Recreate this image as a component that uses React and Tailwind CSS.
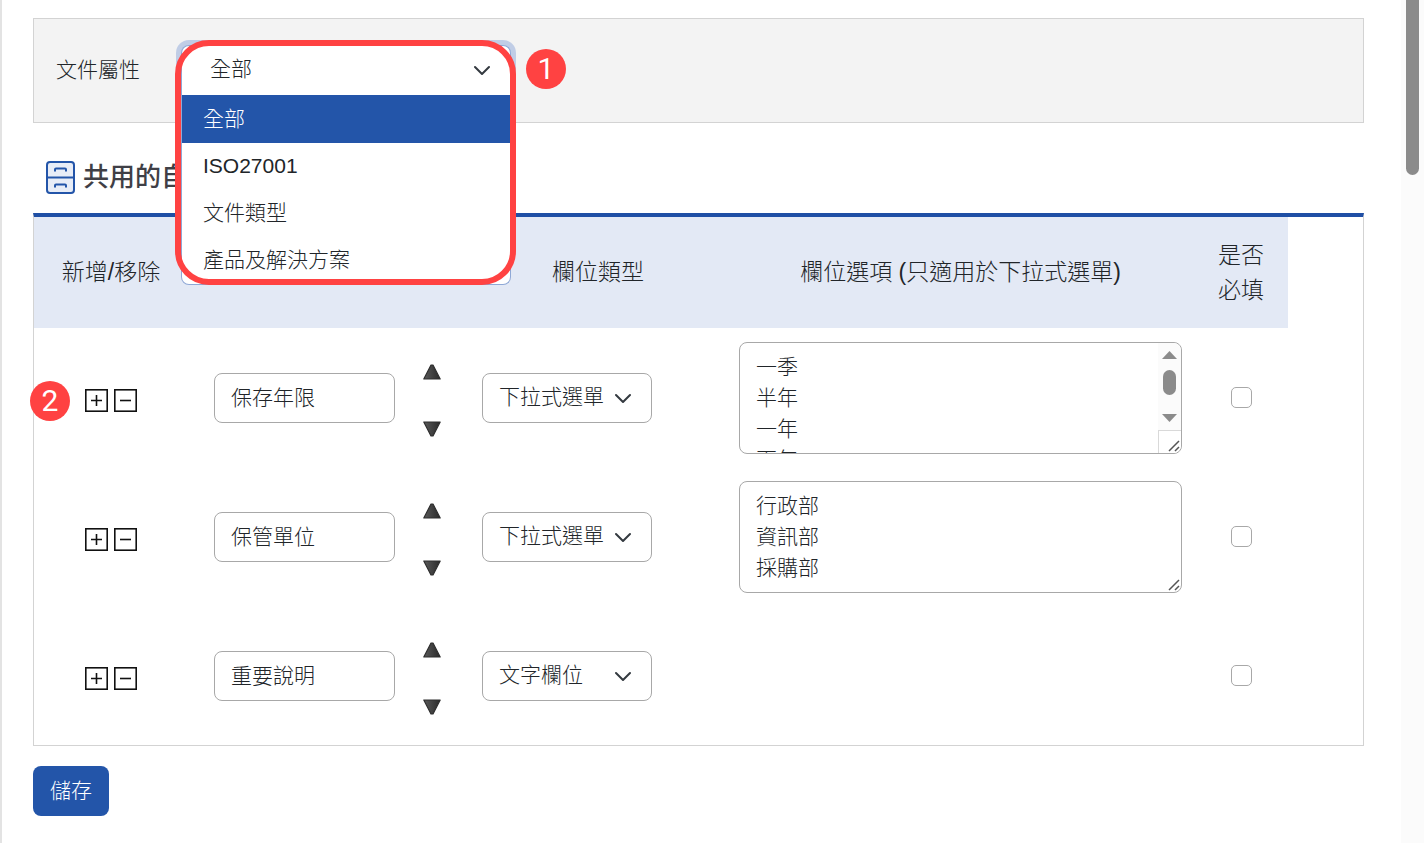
import { useState } from "react";

const categories = ["全部", "ISO27001", "文件類型", "產品及解決方案"];

const initialFields = [
    {
        id: 1,
        name: "保存年限",
        type: "下拉式選單",
        options: "一季\n半年\n一年\n兩年",
        scrolls: true,
        badge: "2",
    },
    {
        id: 2,
        name: "保管單位",
        type: "下拉式選單",
        options: "行政部\n資訊部\n採購部",
    },
    { id: 3, name: "重要說明", type: "文字欄位" },
];

function Chevron({ className }) {
    return (
        <svg
            viewBox="0 0 16 16"
            className={`pointer-events-none absolute top-1/2 h-4 w-4 -translate-y-1/2 ${className}`}
            fill="none"
            stroke="#343a40"
            strokeWidth="2"
            strokeLinecap="round"
            strokeLinejoin="round"
        >
            <path d="m1 5 7 7 7-7" />
        </svg>
    );
}

function CabinetIcon() {
    return (
        <svg viewBox="0 0 29 33" className="h-[33px] w-[29px]" fill="none" stroke="#2355a9" strokeWidth="2">
            <rect x="1" y="1" width="27" height="31" rx="3" fill="#e8edf7" />
            <path d="M1 16.500h27" />
            <path d="M9 10.500V8.500Q9 7.500 10 7.500h9Q20 7.500 20 8.500v2M9 26.500v-2Q9 23.500 10 23.500h9Q20 23.500 20 24.500v2" />
        </svg>
    );
}

function BoxIcon({ plus }) {
    return (
        <svg viewBox="0 0 23 23" className="block h-[23px] w-[23px]" fill="none" stroke="#111">
            <rect x="0.8" y="0.8" width="21.400" height="21.400" strokeWidth="1.6" />
            <path d={plus ? "M6 11.500h11M11.500 6v11" : "M6 11.500h11"} strokeWidth="1.6" />
        </svg>
    );
}

function Triangle({ down }) {
    return (
        <svg viewBox="0 0 18 16" className="block h-4 w-[18px]">
            <defs>
                <linearGradient id="arrowShade" x1="0" y1="0" x2="1" y2="0">
                    <stop offset="0" stopColor="#5a5a5a" />
                    <stop offset="1" stopColor="#2a2a2a" />
                </linearGradient>
            </defs>
            <path
                d={down ? "M0.8 1h16.400L10 15H8z" : "M0.8 15h16.400L10 1H8z"}
                fill="url(#arrowShade)"
                stroke="#2e2e2e"
                strokeWidth="1.200"
                strokeLinejoin="round"
            />
        </svg>
    );
}

function Badge({ children, className }) {
    return (
        <span
            className={`absolute flex h-10 w-10 items-center justify-center rounded-full bg-[#ff4242] font-[Roboto,sans-serif] text-[30px] leading-none font-normal text-white ${className}`}
        >
            {children}
        </span>
    );
}

function ResizeGrip() {
    return (
        <svg viewBox="0 0 12 12" className="h-3 w-3" stroke="#555" strokeWidth="1.500">
            <path d="M1 11 11 1M7 11l4-4" />
        </svg>
    );
}

function OptionsBox({ field }) {
    return (
        <div className="relative">
            <textarea
                aria-label={`${field.name} 欄位選項`}
                defaultValue={field.options}
                className="block h-[112px] w-full resize-none overflow-hidden rounded-lg border border-[#a8a8a8] bg-white px-4 pt-2 leading-[31px]"
            />
            {field.scrolls && (
                <div className="absolute top-px right-px bottom-px flex w-[23px] flex-col items-center rounded-r-lg bg-[#fbfbfb] pt-2">
                    <svg viewBox="0 0 15 8" className="h-2 w-[15px]" fill="#8b8b8b">
                        <path d="M0 8h15L7.500 0z" />
                    </svg>
                    <span className="mt-[11px] h-[25px] w-[13px] rounded-full bg-[#8b8b8b]" />
                    <svg viewBox="0 0 15 8" className="mt-[19px] h-2 w-[15px]" fill="#8b8b8b">
                        <path d="M0 0h15L7.500 8z" />
                    </svg>
                    <span className="mt-auto h-[23px] w-full rounded-br-lg border-t border-l border-[#d9d9d9] bg-white" />
                </div>
            )}
            <span className="pointer-events-none absolute right-[2px] bottom-[2px]">
                <ResizeGrip />
            </span>
        </div>
    );
}

function FieldRow({ field }) {
    return (
        <tr className="h-[139px]">
            <td className="relative pt-[6px]">
                {field.badge && <Badge className="top-[53px] -left-1">{field.badge}</Badge>}
                <div className="flex justify-center gap-[6px]">
                    <button type="button" aria-label="新增">
                        <BoxIcon plus />
                    </button>
                    <button type="button" aria-label="移除">
                        <BoxIcon />
                    </button>
                </div>
            </td>
            <td className="pl-[26px]">
                <input
                    type="text"
                    aria-label="欄位名稱"
                    defaultValue={field.name}
                    className="block h-[50px] w-full rounded-lg border border-[#a8a8a8] bg-white px-4 pb-1"
                />
            </td>
            <td className="pt-[6px]">
                <div className="flex flex-col items-center gap-[41px]">
                    <button type="button" aria-label="上移">
                        <Triangle />
                    </button>
                    <button type="button" aria-label="下移">
                        <Triangle down />
                    </button>
                </div>
            </td>
            <td className="pl-[13px]">
                <div className="relative w-[170px]">
                    <select
                        aria-label="欄位類型"
                        defaultValue={field.type}
                        className="block h-[50px] w-full appearance-none rounded-lg border border-[#a8a8a8] bg-white pr-10 pb-[2px] pl-4"
                    >
                        <option>下拉式選單</option>
                        <option>文字欄位</option>
                    </select>
                    <Chevron className="right-[21px]" />
                </div>
            </td>
            <td className="px-3">{field.options && <OptionsBox field={field} />}</td>
            <td>
                <input
                    type="checkbox"
                    aria-label="是否必填"
                    className="mx-auto block h-[21px] w-[21px] appearance-none rounded-[5px] border border-[#a8a8a8] bg-white checked:bg-[#2355a9]"
                />
            </td>
        </tr>
    );
}

function CategoryPicker() {
    const [selected, setSelected] = useState(categories[0]);

    return (
        <div className="relative ml-[41px] w-[330px]">
            <select
                id="category"
                value={selected}
                onChange={(e) => setSelected(e.target.value)}
                className="block h-[50px] w-full appearance-none rounded-t-lg border border-b-0 border-[#8fa8d6] bg-white pr-12 pb-[2px] pl-7 ring-[5px] ring-[#c0cde6] outline-none"
            >
                {categories.map((category) => (
                    <option key={category}>{category}</option>
                ))}
            </select>
            <Chevron className="right-[21px]" />
            <div
                role="listbox"
                aria-label="文件屬性"
                className="absolute top-full left-0 z-10 w-full rounded-b-lg border border-t-0 border-[#8fa8d6] bg-white"
            >
                {categories.map((category) => (
                    <button
                        key={category}
                        type="button"
                        role="option"
                        aria-selected={category === selected}
                        onClick={() => setSelected(category)}
                        className={`block w-full px-[21px] text-left ${
                            category === selected
                                ? "h-12 bg-[#2355a9] text-white"
                                : "h-[47px]"
                        }`}
                    >
                        {category}
                    </button>
                ))}
            </div>
            <div className="pointer-events-none absolute -top-[5px] -left-[6px] z-20 h-[245px] w-[341px] rounded-[34px] border-[6px] border-[#ff4242]" />
            <Badge className="top-1 left-[345px]">1</Badge>
        </div>
    );
}

function App() {
    return (
        <div className="flex min-h-screen border-l-2 border-[#e3e3e3] bg-white font-['Liberation_Sans','Noto_Sans_CJK_TC',sans-serif] text-[21px] font-light text-[#212529]">
            <main className="min-w-0 flex-1 pt-[18px] pr-[37px] pb-[27px] pl-[31px]">
                <section className="flex h-[105px] items-center border border-[#d3d3d3] bg-[#f3f3f3] pb-[2px] pl-[22px]">
                    <label htmlFor="category">文件屬性</label>
                    <CategoryPicker />
                </section>

                <h2 className="flex h-[90px] items-center gap-2 pt-[18px] pl-[13px] text-[26px] font-medium text-[#3f3f46]">
                    <CabinetIcon />
                    共用的自
                </h2>

                <section className="border border-t-4 border-[#d3d3d3] border-t-[#1f4fa5] pr-[75px]">
                    <table className="w-full table-fixed">
                        <colgroup>
                            <col className="w-[154px]" />
                            <col className="w-[207px]" />
                            <col className="w-[74px]" />
                            <col className="w-[258px]" />
                            <col />
                            <col className="w-[94px]" />
                        </colgroup>
                        <thead>
                            <tr className="h-[111px] bg-[#e3e9f5] text-[23px] leading-[35px]">
                                <th className="font-light">新增/移除</th>
                                <th colSpan={2} aria-label="欄位名稱" />
                                <th className="font-light">欄位類型</th>
                                <th className="font-light">欄位選項 (只適用於下拉式選單)</th>
                                <th className="px-6 font-light">是否必填</th>
                            </tr>
                        </thead>
                        <tbody>
                            {initialFields.map((field) => (
                                <FieldRow key={field.id} field={field} />
                            ))}
                        </tbody>
                    </table>
                </section>

                <button
                    type="button"
                    className="mt-5 h-[50px] rounded-lg bg-[#2355a9] px-[17px] text-white"
                >
                    儲存
                </button>
            </main>
            <div className="w-[23px] bg-[#fbfbfb] pl-[5px]">
                <div className="h-[175px] w-[13px] rounded-b-full bg-[#8b8b8b]" />
            </div>
        </div>
    );
}

export default App;
